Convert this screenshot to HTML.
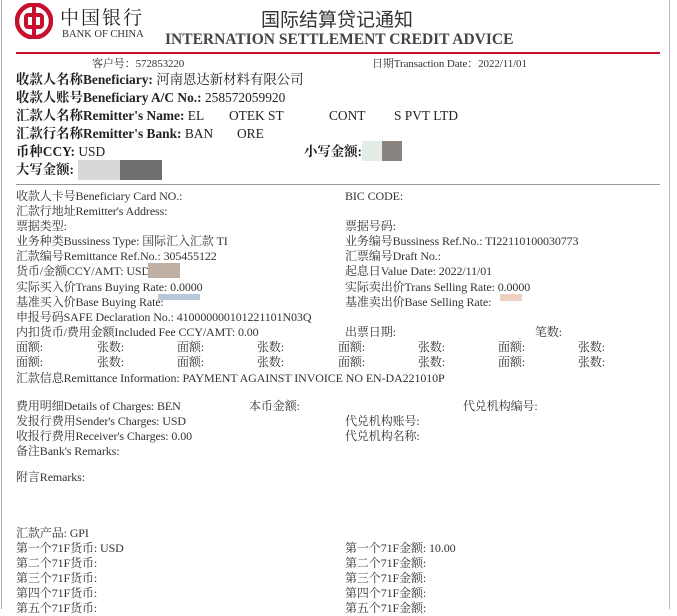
<!DOCTYPE html>
<html><head><meta charset="utf-8"><style>
*{margin:0;padding:0;box-sizing:border-box}
body{width:677px;height:609px;background:#fff;position:relative;overflow:hidden;font-family:"Liberation Serif","Noto Serif CJK SC","WenQuanYi Zen Hei",serif;color:#333}
.a{position:absolute;white-space:nowrap}
.b{font-size:13.4px;font-weight:bold;color:#222;line-height:18px}
.b span{font-weight:normal}
.s{font-size:12px;line-height:15px;color:#333;letter-spacing:-0.1px}
.blur{position:absolute}
</style></head><body>
<div class="a" style="left:1px;top:0;width:1px;height:609px;background:#aaa"></div>
<div class="a" style="left:669px;top:0;width:1px;height:609px;background:#bbb"></div>
<svg class="a" style="left:15px;top:3px" width="38" height="36" viewBox="0 0 38 36"><ellipse cx="19" cy="18" rx="17" ry="16.5" fill="none" stroke="#c8102e" stroke-width="4.5"/><rect x="11" y="12" width="16" height="12" rx="2" fill="none" stroke="#c8102e" stroke-width="4"/><rect x="17" y="1" width="4" height="34" fill="#c8102e"/></svg>
<div class="a" style="left:60px;top:3px;font-size:19px;font-family:'Noto Serif CJK SC',serif;color:#222;letter-spacing:2px">中国银行</div>
<div class="a" style="left:62px;top:29px;font-size:10.5px;color:#333">BANK OF CHINA</div>
<div class="a" style="left:261px;top:5px;font-size:19px;color:#333;font-family:'Noto Sans CJK SC',sans-serif">国际结算贷记通知</div>
<div class="a" style="left:165px;top:31px;font-size:15.5px;font-weight:bold;color:#444">INTERNATION SETTLEMENT CREDIT ADVICE</div>
<div class="a" style="left:16px;top:52px;width:644px;height:2px;background:#c8102e"></div>
<div class="a s" style="left:92px;top:57px;font-size:11px">客户号：572853220</div>
<div class="a s" style="left:372px;top:57px;font-size:11px">日期Transaction Date：2022/11/01</div>
<div class="a b" style="left:16px;top:71px">收款人名称Beneficiary: <span>河南恩达新材料有限公司</span></div>
<div class="a b" style="left:16px;top:89px">收款人账号Beneficiary A/C No.: <span>258572059920</span></div>
<div class="a b" style="left:16px;top:107px">汇款人名称Remitter's Name: <span>EL</span></div>
<div class="a b" style="left:229px;top:107px"><span>OTEK ST</span></div>
<div class="a b" style="left:329px;top:107px"><span>CONT</span></div>
<div class="a b" style="left:394px;top:107px"><span>S PVT LTD</span></div>
<div class="a b" style="left:16px;top:125px">汇款行名称Remitter's Bank: <span>BAN</span></div>
<div class="a b" style="left:237px;top:125px"><span>ORE</span></div>
<div class="a b" style="left:16px;top:143px">币种CCY: <span>USD</span></div>
<div class="a b" style="left:304px;top:143px">小写金额:</div>
<div class="blur" style="left:362px;top:141px;width:20px;height:20px;background:#e4ece8"></div>
<div class="blur" style="left:382px;top:141px;width:20px;height:20px;background:#8a8480"></div>
<div class="a b" style="left:16px;top:161px">大写金额:</div>
<div class="blur" style="left:78px;top:160px;width:42px;height:20px;background:#d8d8d8"></div>
<div class="blur" style="left:120px;top:160px;width:42px;height:20px;background:#6e6e6e"></div>
<div class="a" style="left:16px;top:184px;width:644px;height:1px;background:#999"></div>

<div class="a s" style="left:16px;top:189px">收款人卡号Beneficiary Card NO.:</div>
<div class="a s" style="left:345px;top:189px">BIC CODE:</div>
<div class="a s" style="left:16px;top:204px">汇款行地址Remitter's Address:</div>
<div class="a s" style="left:16px;top:219px">票据类型:</div>
<div class="a s" style="left:345px;top:219px">票据号码:</div>
<div class="a s" style="left:16px;top:234px">业务种类Bussiness Type: 国际汇入汇款 TI</div>
<div class="a s" style="left:345px;top:234px">业务编号Bussiness Ref.No.: TI22110100030773</div>
<div class="a s" style="left:16px;top:249px">汇款编号Remittance Ref.No.: 305455122</div>
<div class="a s" style="left:345px;top:249px">汇票编号Draft No.:</div>
<div class="a s" style="left:16px;top:264px">货币/金额CCY/AMT: USD</div>
<div class="blur" style="left:148px;top:263px;width:32px;height:15px;background:#c0b0a4"></div>
<div class="a s" style="left:345px;top:264px">起息日Value Date: 2022/11/01</div>
<div class="a s" style="left:16px;top:280px">实际买入价Trans Buying Rate: 0.0000</div>
<div class="a s" style="left:345px;top:280px">实际卖出价Trans Selling Rate: 0.0000</div>
<div class="blur" style="left:158px;top:294px;width:42px;height:6px;background:#b8c8dc"></div>
<div class="a s" style="left:16px;top:295px">基准买入价Base Buying Rate:</div>
<div class="a s" style="left:345px;top:295px">基准卖出价Base Selling Rate:</div>
<div class="blur" style="left:500px;top:294px;width:22px;height:7px;background:#ecd0c0"></div>
<div class="a s" style="left:16px;top:310px">申报号码SAFE Declaration No.: 410000000101221101N03Q</div>
<div class="a s" style="left:16px;top:325px">内扣货币/费用金额Included Fee CCY/AMT: 0.00</div>
<div class="a s" style="left:345px;top:325px">出票日期:</div>
<div class="a s" style="left:535px;top:325px">笔数:</div>
<div class="a s" style="left:16px;top:340px">面额:</div><div class="a s" style="left:97px;top:340px">张数:</div><div class="a s" style="left:177px;top:340px">面额:</div><div class="a s" style="left:257px;top:340px">张数:</div><div class="a s" style="left:338px;top:340px">面额:</div><div class="a s" style="left:418px;top:340px">张数:</div><div class="a s" style="left:498px;top:340px">面额:</div><div class="a s" style="left:578px;top:340px">张数:</div>
<div class="a s" style="left:16px;top:355px">面额:</div><div class="a s" style="left:97px;top:355px">张数:</div><div class="a s" style="left:177px;top:355px">面额:</div><div class="a s" style="left:257px;top:355px">张数:</div><div class="a s" style="left:338px;top:355px">面额:</div><div class="a s" style="left:418px;top:355px">张数:</div><div class="a s" style="left:498px;top:355px">面额:</div><div class="a s" style="left:578px;top:355px">张数:</div>
<div class="a s" style="left:16px;top:371px">汇款信息Remittance Information: PAYMENT AGAINST INVOICE NO EN-DA221010P</div>

<div class="a s" style="left:16px;top:399px">费用明细Details of Charges: BEN</div>
<div class="a s" style="left:249px;top:399px">本币金额:</div>
<div class="a s" style="left:463px;top:399px">代兑机构编号:</div>
<div class="a s" style="left:16px;top:414px">发报行费用Sender's Charges: USD</div>
<div class="a s" style="left:345px;top:414px">代兑机构账号:</div>
<div class="a s" style="left:16px;top:429px">收报行费用Receiver's Charges: 0.00</div>
<div class="a s" style="left:345px;top:429px">代兑机构名称:</div>
<div class="a s" style="left:16px;top:444px">备注Bank's Remarks:</div>
<div class="a s" style="left:16px;top:470px">附言Remarks:</div>
<div class="a s" style="left:16px;top:526px">汇款产品: GPI</div>
<div class="a s" style="left:16px;top:541px">第一个71F货币: USD</div>
<div class="a s" style="left:345px;top:541px">第一个71F金额: 10.00</div>
<div class="a s" style="left:16px;top:556px">第二个71F货币:</div>
<div class="a s" style="left:345px;top:556px">第二个71F金额:</div>
<div class="a s" style="left:16px;top:571px">第三个71F货币:</div>
<div class="a s" style="left:345px;top:571px">第三个71F金额:</div>
<div class="a s" style="left:16px;top:586px">第四个71F货币:</div>
<div class="a s" style="left:345px;top:586px">第四个71F金额:</div>
<div class="a s" style="left:16px;top:601px">第五个71F货币:</div>
<div class="a s" style="left:345px;top:601px">第五个71F金额:</div>
</body></html>
